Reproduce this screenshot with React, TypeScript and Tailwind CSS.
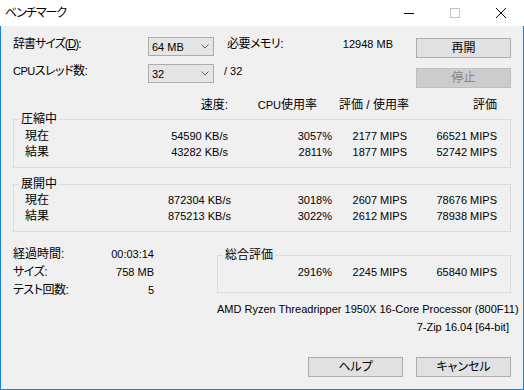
import React from "react";

const FONT =
  "[font-family:'Liberation_Sans','Noto_Sans_CJK_JP',sans-serif] [font-feature-settings:'palt']";

function Combo({ value }: { value: string }) {
  return (
    <div className="w-[66px] h-[19px] bg-[#e5e5e5] border border-[#acacac] flex items-center justify-between pl-[3px] pr-[4px]">
      <span className="text-[11px] leading-4">{value}</span>
      <svg width="8" height="5" viewBox="0 0 8 5">
        <path d="M0.5 0.5 L4 4 L7.5 0.5" fill="none" stroke="#606060" strokeWidth="1" />
      </svg>
    </div>
  );
}

function Btn({ children, disabled }: { children: React.ReactNode; disabled?: boolean }) {
  return (
    <div
      className={
        disabled
          ? "w-[95px] h-[20px] bg-[#cccccc] border border-[#bfbfbf] text-[#838383] flex items-center justify-center"
          : "w-[95px] h-[20px] bg-[#e1e1e1] border border-[#adadad] flex items-center justify-center"
      }
    >
      {children}
    </div>
  );
}

function Row({ label, v }: { label: string; v: [string, string, string, string] }) {
  return (
    <div className="grid grid-cols-[143px_60px_104px_75px_90px] h-4">
      <span>{label}</span>
      <span className="text-right text-[11px] whitespace-nowrap">{v[0]}</span>
      <span className="text-right text-[11px] whitespace-nowrap">{v[1]}</span>
      <span className="text-right text-[11px] whitespace-nowrap">{v[2]}</span>
      <span className="text-right text-[11px] whitespace-nowrap">{v[3]}</span>
    </div>
  );
}

function GroupLabel({ text }: { text: string }) {
  return (
    <span className="absolute left-[5px] -top-[9px] px-[2px] bg-[#f0f0f0] leading-4">{text}</span>
  );
}

export default function App() {
  return (
    <div className={"w-[524px] h-[390px] flex flex-col text-[12px] leading-4 text-black " + FONT}>
      {/* title bar */}
      <div className="h-[26px] bg-white flex items-center">
        <span className="pl-[5px] tracking-[-1px]">ベンチマーク</span>
        <div className="ml-auto flex h-full">
          <div className="w-[46px] h-full flex items-center justify-center">
            <svg width="10" height="10" viewBox="0 0 10 10">
              <path d="M0 5.5 H10" stroke="#000" strokeWidth="1" />
            </svg>
          </div>
          <div className="w-[46px] h-full flex items-center justify-center">
            <svg width="10" height="10" viewBox="0 0 10 10">
              <rect x="0.5" y="0.5" width="9" height="9" fill="none" stroke="#c4c4c4" strokeWidth="1" />
            </svg>
          </div>
          <div className="w-[46px] h-full flex items-center justify-center">
            <svg width="10" height="10" viewBox="0 0 10 10">
              <path d="M0 0 L10 10 M10 0 L0 10" stroke="#000" strokeWidth="1" />
            </svg>
          </div>
        </div>
      </div>

      {/* client */}
      <div className="flex-1 bg-[#f0f0f0] border-x border-b border-[#1883d7] flex flex-col">
        {/* top section */}
        <div className="h-[71px] flex">
          <div className="ml-[12px] mt-[11px] w-[380px] flex flex-col gap-[8px]">
            <div className="flex items-start h-[19px]">
              <span className="w-[135px] -mt-[1px] tracking-[-1px]">
                辞書サイズ(<span className="underline">D</span>):
              </span>
              <Combo value="64 MB" />
              <div className="ml-[13px] w-[166px] flex justify-between -mt-[1px]">
                <span className="tracking-[-0.5px]">必要メモリ:</span>
                <span className="text-[11px]">12948 MB</span>
              </div>
            </div>
            <div className="flex items-start h-[19px]">
              <span className="w-[135px] -mt-[1px] tracking-[-0.5px]">
                <span className="text-[11px]">CPU</span>スレッド数:
              </span>
              <Combo value="32" />
              <span className="ml-[10px] text-[11px] -mt-[1px]">/ 32</span>
            </div>
          </div>
          <div className="ml-[23px] mt-[12px] flex flex-col gap-[10px]">
            <Btn>再開</Btn>
            <Btn disabled>停止</Btn>
          </div>
        </div>

        {/* header */}
        <div className="ml-[24px] grid grid-cols-[143px_60px_104px_75px_90px] h-4">
          <span></span>
          <span className="text-right whitespace-nowrap">速度:</span>
          <span className="text-right pr-[15px] whitespace-nowrap">
            <span className="text-[11px]">CPU</span>使用率
          </span>
          <span className="text-right whitespace-nowrap -mr-[2px]">評価 / 使用率</span>
          <span className="text-right whitespace-nowrap">評価</span>
        </div>

        {/* compression group */}
        <div className="ml-[12px] mt-[6px] w-[498px] h-[49px] border border-[#dcdcdc] relative pt-[8px] pl-[11px]">
          <GroupLabel text="圧縮中" />
          <Row label="現在" v={["54590 KB/s", "3057%", "2177 MIPS", "66521 MIPS"]} />
          <Row label="結果" v={["43282 KB/s", "2811%", "1877 MIPS", "52742 MIPS"]} />
        </div>

        {/* decompression group */}
        <div className="ml-[12px] mt-[16px] w-[498px] h-[48px] border border-[#dcdcdc] relative pt-[7px] pl-[11px]">
          <GroupLabel text="展開中" />
          <Row label="現在" v={["872304 KB/s", "3018%", "2607 MIPS", "78676 MIPS"]} />
          <Row label="結果" v={["875213 KB/s", "3022%", "2612 MIPS", "78938 MIPS"]} />
        </div>

        {/* bottom section */}
        <div className="flex">
          <div className="ml-[12px] mt-[13px] w-[141px] flex flex-col">
            <div className="h-[18px] leading-[18px] flex justify-between">
              <span>経過時間:</span>
              <span className="text-[11px]">00:03:14</span>
            </div>
            <div className="h-[18px] leading-[18px] flex justify-between">
              <span className="tracking-[-0.5px]">サイズ:</span>
              <span className="text-[11px]">758 MB</span>
            </div>
            <div className="h-[18px] leading-[18px] flex justify-between">
              <span className="tracking-[-0.5px]">テスト回数:</span>
              <span className="text-[11px]">5</span>
            </div>
          </div>
          <div className="ml-[63px] w-[294px] flex flex-col">
            <div className="mt-[23px] h-[38px] border border-[#dcdcdc] relative pt-[8px]">
              <GroupLabel text="総合評価" />
              <div className="grid grid-cols-[114px_75px_90px] h-4">
                <span className="text-right text-[11px]">2916%</span>
                <span className="text-right text-[11px]">2245 MIPS</span>
                <span className="text-right text-[11px]">65840 MIPS</span>
              </div>
            </div>
            <div className="mt-[8px] h-4 pr-[2px] text-right text-[11px] whitespace-nowrap">
              AMD Ryzen Threadripper 1950X 16-Core Processor (800F11)
            </div>
            <div className="mt-[2px] h-4 pr-[2px] text-right text-[11px] whitespace-nowrap">
              7-Zip 16.04 [64-bit]
            </div>
          </div>
        </div>

        {/* buttons */}
        <div className="mt-[22px] flex justify-end gap-[13px] pr-[12px]">
          <Btn>ヘルプ</Btn>
          <Btn>キャンセル</Btn>
        </div>
      </div>
    </div>
  );
}
